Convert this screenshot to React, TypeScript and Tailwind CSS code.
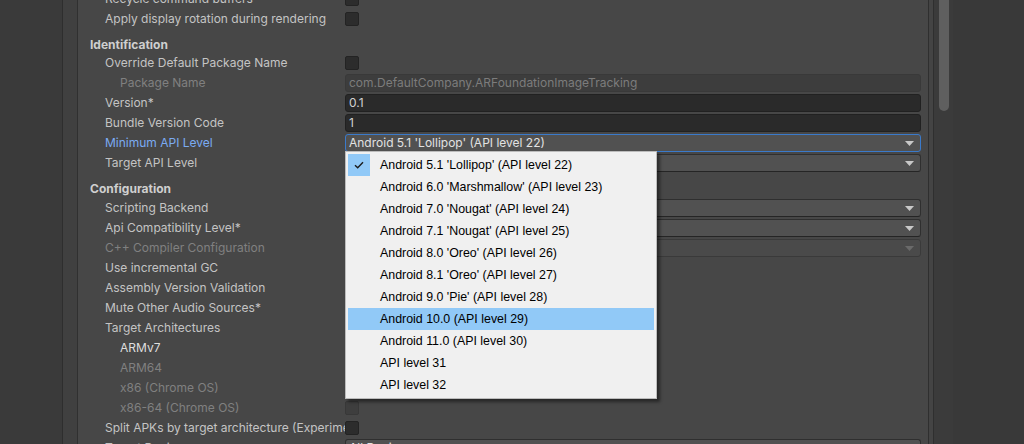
import React from "react";

type Tone = "normal" | "disabled" | "focus" | "bright";

const toneClass: Record<Tone, string> = {
  normal: "text-[#c4c4c4]",
  disabled: "text-[#808080]",
  focus: "text-[#7babf2]",
  bright: "text-[#dedede]",
};

function Arrow({ disabled }: { disabled?: boolean }) {
  return (
    <svg width="9" height="5" viewBox="0 0 9 5" className="shrink-0">
      <path d="M0 0h9L4.5 5z" fill={disabled ? "#6a6a6a" : "#c8c8c8"} />
    </svg>
  );
}

function Checkbox({ disabled }: { disabled?: boolean }) {
  return (
    <div
      className={`h-[14px] w-[14px] rounded-[2px] border ${
        disabled ? "border-[#383838] bg-[#3e3e3e]" : "border-[#232323] bg-[#2c2c2c]"
      }`}
    />
  );
}

function TextField({ value, disabled }: { value: string; disabled?: boolean }) {
  return (
    <div
      className={`flex h-[18px] flex-1 items-center rounded-[3px] border px-[3px] ${
        disabled
          ? "border-[#393939] bg-[#3d3d3d] text-[#7c7c7c]"
          : "border-[#212121] bg-[#2a2a2a] text-[#d2d2d2]"
      }`}
    >
      {value}
    </div>
  );
}

function Dropdown({
  value,
  disabled,
  focused,
}: {
  value: string;
  disabled?: boolean;
  focused?: boolean;
}) {
  return (
    <div
      className={`flex h-[18px] flex-1 items-center justify-between rounded-[3px] border pl-[3px] pr-[6px] ${
        focused
          ? "border-[#3a7acb] bg-[#515151] text-[#e2e2e2]"
          : disabled
            ? "border-[#3a3a3a] bg-[#4a4a4a] text-[#7e7e7e]"
            : "border-[#2f2f2f] border-b-[#252525] bg-[#515151] text-[#e2e2e2]"
      }`}
    >
      <span className="whitespace-nowrap">{value}</span>
      <Arrow disabled={disabled} />
    </div>
  );
}

function Row({
  label,
  indent = 1,
  tone = "normal",
  children,
}: {
  label: string;
  indent?: 1 | 2;
  tone?: Tone;
  children?: React.ReactNode;
}) {
  return (
    <div className="flex h-5 items-center">
      <div
        className={`w-[267px] shrink-0 overflow-hidden whitespace-nowrap ${
          indent === 2 ? "pl-[42px]" : "pl-[27px]"
        } ${toneClass[tone]}`}
      >
        {label}
      </div>
      <div className="flex flex-1 items-center">{children}</div>
      <div className="w-[7px] shrink-0" />
    </div>
  );
}

function Header({ title, className = "h-[17px]" }: { title: string; className?: string }) {
  return (
    <div className={`mt-[7px] flex items-center pl-3 font-bold text-[#cfcfcf] ${className}`}>
      {title}
    </div>
  );
}

const apiLevels = [
  "Android 5.1 'Lollipop' (API level 22)",
  "Android 6.0 'Marshmallow' (API level 23)",
  "Android 7.0 'Nougat' (API level 24)",
  "Android 7.1 'Nougat' (API level 25)",
  "Android 8.0 'Oreo' (API level 26)",
  "Android 8.1 'Oreo' (API level 27)",
  "Android 9.0 'Pie' (API level 28)",
  "Android 10.0 (API level 29)",
  "Android 11.0 (API level 30)",
  "API level 31",
  "API level 32",
];

// The open popup of the Minimum API Level field
function ApiPopup() {
  const selected = 0;
  const hovered = 7;
  return (
    <div className="absolute left-[345px] top-[151px] w-[312px] border border-[#bcbcbc] bg-[#f0f0f0] p-[2px] font-['Liberation_Sans',Arial,sans-serif] text-[12.4px] text-black shadow-[3px_3px_3px_rgba(0,0,0,0.45)]">
      {apiLevels.map((item, i) => (
        <div
          key={item}
          className={`relative flex h-[22px] items-center pl-[32px] ${
            i === hovered ? "bg-[#91c9f7]" : ""
          }`}
        >
          {i === selected && (
            <div className="absolute left-0 top-0 flex h-[22px] w-[22px] items-center justify-center bg-[#91c9f7]">
              <svg width="10" height="8" viewBox="0 0 10 8">
                <path
                  d="M1 4.2 3.7 6.8 9 1.2"
                  fill="none"
                  stroke="#1c1c1c"
                  strokeWidth="1.4"
                />
              </svg>
            </div>
          )}
          {item}
        </div>
      ))}
    </div>
  );
}

export default function App() {
  return (
    <div className="relative flex h-[444px] w-[1024px] overflow-hidden bg-[#393939] font-[Inter,'Noto_Sans',sans-serif] text-[12px]">
      {/* left panels */}
      <div className="w-[63px] shrink-0 border-r border-[#2e2e2e] bg-[#3a3a3a]" />
      <div className="w-[15px] shrink-0 border-r border-[#303030] bg-[#404040]" />

      {/* inspector */}
      <div className="w-[850px] shrink-0 bg-[#474747]">
        <div className="-mt-[11px]">
          <Row label="Recycle command buffers">
            <Checkbox />
          </Row>
          <Row label="Apply display rotation during rendering">
            <Checkbox />
          </Row>

          <Header title="Identification" />
          <Row label="Override Default Package Name">
            <Checkbox />
          </Row>
          <Row label="Package Name" indent={2} tone="disabled">
            <TextField value="com.DefaultCompany.ARFoundationImageTracking" disabled />
          </Row>
          <Row label="Version*">
            <TextField value="0.1" />
          </Row>
          <Row label="Bundle Version Code">
            <TextField value="1" />
          </Row>
          <Row label="Minimum API Level" tone="focus">
            <Dropdown value="Android 5.1 'Lollipop' (API level 22)" focused />
          </Row>
          <Row label="Target API Level">
            <Dropdown value="Automatic (highest installed)" />
          </Row>

          <Header title="Configuration" className="h-[18px]" />
          <Row label="Scripting Backend">
            <Dropdown value="IL2CPP" />
          </Row>
          <Row label="Api Compatibility Level*">
            <Dropdown value=".NET Standard 2.1" />
          </Row>
          <Row label="C++ Compiler Configuration" tone="disabled">
            <Dropdown value="Release" disabled />
          </Row>
          <Row label="Use incremental GC">
            <Checkbox />
          </Row>
          <Row label="Assembly Version Validation">
            <Checkbox />
          </Row>
          <Row label="Mute Other Audio Sources*">
            <Checkbox />
          </Row>
          <Row label="Target Architectures" />
          <Row label="ARMv7" indent={2} tone="bright">
            <Checkbox />
          </Row>
          <Row label="ARM64" indent={2} tone="disabled">
            <Checkbox disabled />
          </Row>
          <Row label="x86 (Chrome OS)" indent={2} tone="disabled">
            <Checkbox disabled />
          </Row>
          <Row label="x86-64 (Chrome OS)" indent={2} tone="disabled">
            <Checkbox disabled />
          </Row>
          <Row label="Split APKs by target architecture (Experimental)">
            <Checkbox />
          </Row>
          <Row label="Target Devices">
            <Dropdown value="All Devices" />
          </Row>
        </div>
      </div>

      {/* scrollbar */}
      <div className="w-[6px] shrink-0 border-x border-[#2f2f2f] bg-[#444444]" />
      <div className="flex w-[19px] shrink-0 justify-center bg-[#3b3b3b]">
        <div className="h-[111px] w-[10px] rounded-b-[5px] bg-[#5f5f5f]" />
      </div>
      <div className="flex-1 bg-[#393939]" />

      <ApiPopup />
    </div>
  );
}
